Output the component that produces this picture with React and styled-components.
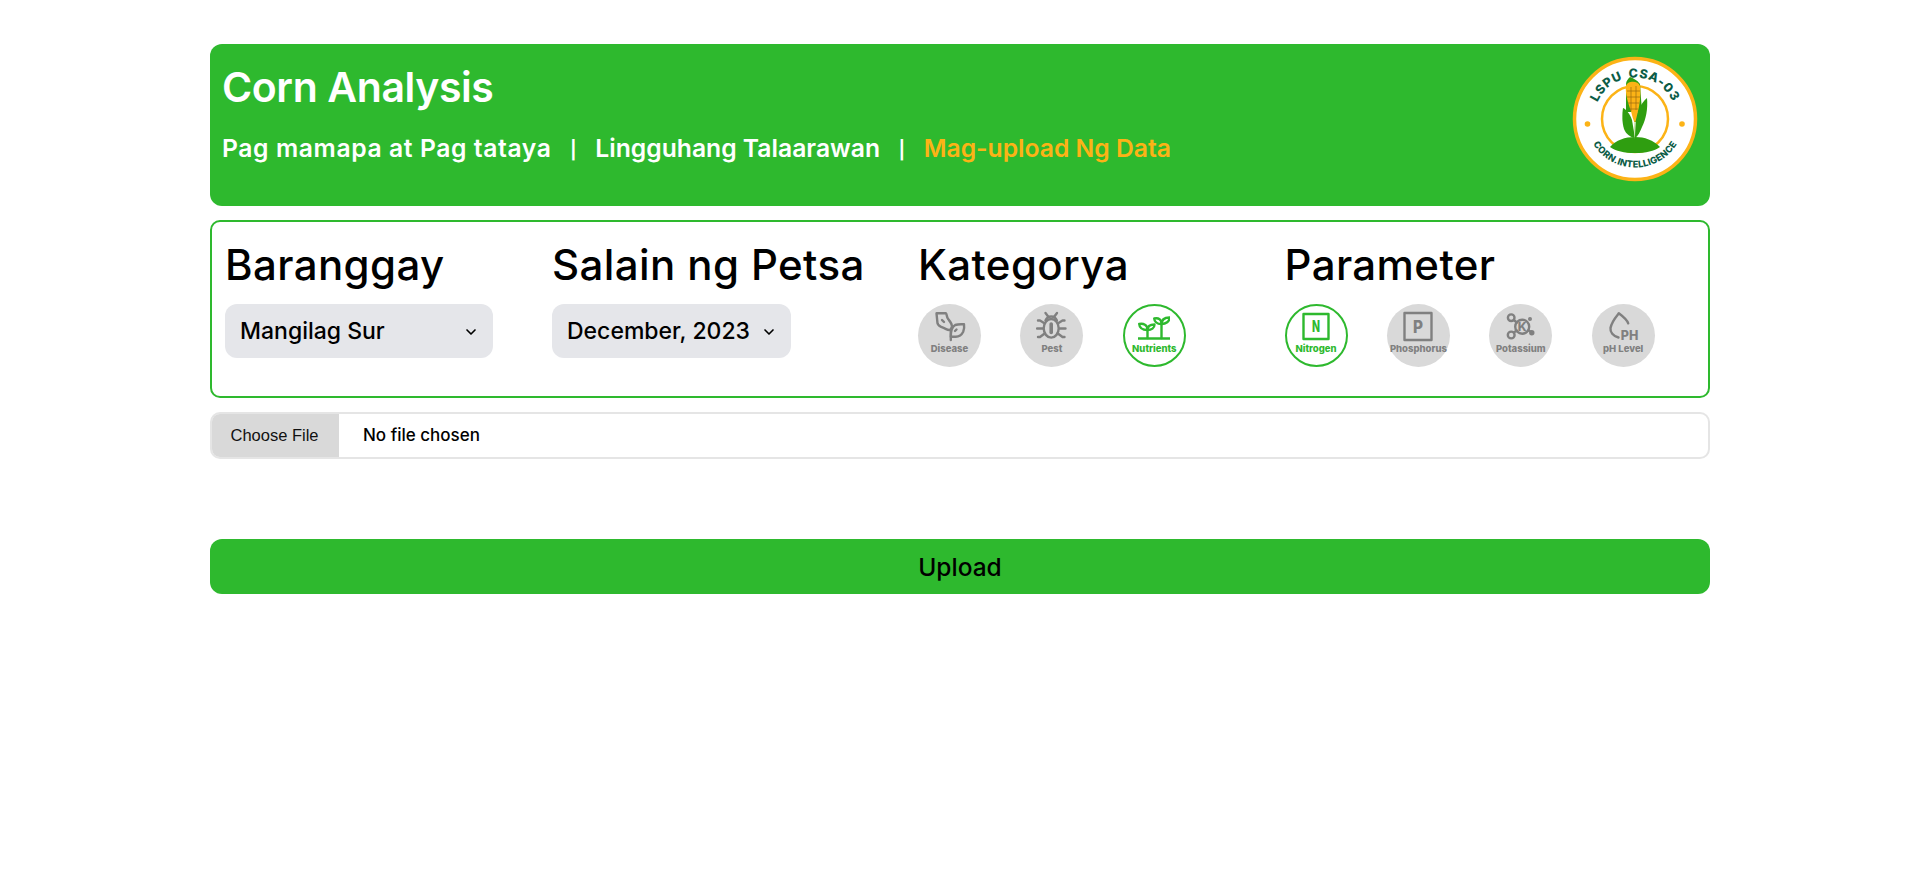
import React from "react";
import styled, { createGlobalStyle } from "styled-components";
import { ChevronDown } from "lucide-react";

const GREEN = "#2eb92e";
const YELLOW = "#fcb316";
const GREY = "#808080";
const FONT = `Inter, "Noto Sans", sans-serif`;

const Global = createGlobalStyle`
  html, body { margin: 0; padding: 0; background: #fff; }
  body { font-family: ${FONT}; color: #000; min-height: 880px; }
  * { box-sizing: border-box; }
`;

const Page = styled.main`
  width: 1500px;
  margin: 0 auto;
  padding-top: 44px;
  display: flex;
  flex-direction: column;
`;

const Header = styled.header`
  height: 162px;
  background: ${GREEN};
  border-radius: 12px;
  padding: 12px 12px 0;
  display: flex;
  justify-content: space-between;
  align-items: flex-start;
  color: #fff;
`;

const Brand = styled.div`
  display: flex;
  flex-direction: column;
  gap: 20px;
`;

const Title = styled.h1`
  margin: 7px 0 0;
  font-size: 41px;
  line-height: 48px;
  font-weight: 600;
  letter-spacing: -0.4px;
`;

const Nav = styled.nav`
  display: flex;
  align-items: center;
  gap: 18px;
  font-size: 24.7px;
  line-height: 34px;
  font-weight: 600;
`;

const NavLink = styled.a`
  color: ${(p) => (p.$active ? YELLOW : "#fff")};
  letter-spacing: ${(p) => p.$track || 0}px;
`;

const NavDivider = styled.span`
  font: 700 21px/34px "DejaVu Sans", sans-serif;
`;

const Panel = styled.section`
  margin-top: 14px;
  height: 178px;
  border: 2px solid ${GREEN};
  border-radius: 10px;
  padding: 14px 13px 0;
  display: grid;
  grid-template-columns: 268px 307px 307.5px 1fr;
  column-gap: 59px;
`;

const Group = styled.div`
  display: flex;
  flex-direction: column;
`;

const Heading = styled.h2`
  margin: 0 0 10px;
  font-size: 42px;
  line-height: 58px;
  font-weight: 500;
  letter-spacing: 0.4px;
  white-space: nowrap;
`;

const SelectWrap = styled.div`
  position: relative;
  width: ${(p) => p.$width}px;
  height: 54px;
`;

const Select = styled.select`
  width: 100%;
  height: 100%;
  appearance: none;
  border: 0;
  border-radius: 12px;
  background: #e5e6ea;
  padding: 0 15px;
  font: 500 23px ${FONT};
  color: #000;
`;

const Chevron = styled(ChevronDown)`
  position: absolute;
  right: 14px;
  top: 20px;
  pointer-events: none;
`;

const Tiles = styled.div`
  display: flex;
  gap: 39.4px;
`;

const Tile = styled.button`
  width: 63px;
  height: 63px;
  flex: none;
  border-radius: 50%;
  border: ${(p) => (p.$active ? `2px solid ${GREEN}` : "0")};
  background: ${(p) => (p.$active ? "#fff" : "#d9d9d9")};
  color: ${(p) => (p.$active ? GREEN : GREY)};
  display: flex;
  flex-direction: column;
  align-items: center;
  justify-content: flex-start;
  padding: ${(p) => (p.$active ? 5 : 7)}px 0 0;
  font: 800 9.5px/12px Inter, sans-serif;
  white-space: nowrap;
`;

const TileIcon = styled.svg`
  width: 32px;
  height: 31px;
  flex: none;
  margin-bottom: 1px;
  fill: none;
  stroke: currentColor;
  stroke-width: 2.4;
  stroke-linecap: round;
  stroke-linejoin: round;
`;

const IconLetter = styled.text`
  font: 800 ${(p) => p.$size}px Inter, sans-serif;
  fill: currentColor;
  stroke: none;
  text-anchor: middle;
`;

const FileInput = styled.input`
  margin-top: 14px;
  height: 47px;
  width: 100%;
  display: block;
  border: 2px solid #e5e5e5;
  border-radius: 10px;
  font: 500 17px ${FONT};
  color: #000;
  background: #fff;
  overflow: hidden;

  &::file-selector-button {
    height: 47px;
    width: 129px;
    margin: -2px 24px -2px -2px;
    border: 0;
    background: #d9d9d9;
    color: #111;
    font: 400 16.5px "Liberation Sans", Arial, sans-serif;
  }
`;

const UploadButton = styled.button`
  margin-top: 80px;
  height: 55px;
  width: 100%;
  border: 0;
  border-radius: 12px;
  background: ${GREEN};
  color: #000;
  font: 500 24.5px ${FONT};
`;

const DiseaseIcon = () => (
  <TileIcon viewBox="0 0 32 31" strokeWidth="2.8">
    <path d="M2.5 2.3h9.3c1.5 1.2.5 3.5 2.5 6 2 2.5 4 4.5 3.5 7.4-.5 2.5-1.5 3.3-2.6 3.3-2 0-3.5-1.3-6.2-2.3-3-1.1-5-2.2-5.5-4.4z" />
    <path d="M8 9l2 2" />
    <path d="M16.8 19v10" />
    <path d="M16.8 25.7c0-6 1.4-10 4.4-11.7 2.8-1 6-.9 8.8-.7.5 3 .2 5-.8 7.4-1.5 3-4.5 5-7.4 5z" />
    <path d="M21 20l1.5-1.5" />
  </TileIcon>
);

const PestIcon = () => (
  <TileIcon viewBox="0 0 32 31" strokeWidth="2.6">
    <path d="M9.5 2l3 4M21 2l-3 4" />
    <path d="M9.5 9.5c1-2.5 3-4 5.7-4s4.7 1.5 5.7 4" />
    <ellipse cx="15.2" cy="17.3" rx="7.5" ry="9.3" />
    <path d="M15.2 13v8.5" strokeWidth="3.6" />
    <path d="M8 12L4 9.5H2M22.5 12l4-2.5h2M7 17.5H1M23.5 17.5h6M8 23l-4 3H2M22.5 23l4 3h2" />
  </TileIcon>
);

const NutrientsIcon = () => (
  <TileIcon viewBox="0 0 32 31" strokeWidth="3" strokeLinecap="butt">
    <path d="M.5 27.5h31" />
    <path d="M9.5 27V19M23.5 27V12" />
    <path d="M9.5 19c-4.500 0-8-1.800-8.300-6 4-1 8.500.8 8.300 6zM9.500 19c0-3.500 2.500-5.500 7-5.500 0 3.500-3 5.500-7 5.500z" />
    <path d="M23.5 13c-4 0-7-2-7.300-5.500 4.500-1 7.500 1 7.300 5.500zM23.500 13c0-4 3-6.500 8-6.500 0 4-3.500 6.500-8 6.500z" />
  </TileIcon>
);

const BoxLetterIcon = ({ letter, size, width, box }) => (
  <TileIcon viewBox="0 0 32 31" strokeWidth="3" strokeLinecap="butt" strokeLinejoin="miter">
    <rect x={16 - box / 2} y={15.5 - box / 2} width={box} height={box} />
    <IconLetter
      x="16"
      y={15.5 + size * 0.36}
      $size={size}
      textLength={width}
      lengthAdjust="spacingAndGlyphs"
    >
      {letter}
    </IconLetter>
  </TileIcon>
);

const PotassiumIcon = () => (
  <TileIcon viewBox="0 0 32 31" strokeWidth="1.8">
    <circle cx="17.2" cy="15.7" r="7" />
    <IconLetter x="17.2" y="20" $size={12}>K</IconLetter>
    <circle cx="6.2" cy="6.7" r="3.3" />
    <circle cx="6.2" cy="24" r="3.4" />
    <circle cx="26.8" cy="21.7" r="1.5" fill="currentColor" />
    <circle cx="25" cy="8" r="0.8" fill="currentColor" />
    <path d="M8.8 9l3 2.5M8.8 21.5l3-2M23.5 19.5l2 1" />
  </TileIcon>
);

const PhIcon = () => (
  <TileIcon viewBox="0 0 32 31" strokeWidth="2.4">
    <path d="M11.5 26.5C6 25 3 21 3.5 17 4.500 11 8 7 11.800 2.300c4 3 8 6 9.400 10" />
    <IconLetter x="22.5" y="28.5" $size={12.5}>PH</IconLetter>
  </TileIcon>
);

const Logo = () => (
  <svg width="126" height="126" viewBox="0 0 126 126" style={{ flex: "none" }}>
    <defs>
      <path id="arcTop" d="M22 62.5a41 41 0 0 1 82 0" />
      <path id="arcBottom" d="M14 62.5a49 49 0 0 0 98 0" />
    </defs>
    <circle cx="63" cy="63" r="60.5" fill="#fff" stroke={YELLOW} strokeWidth="3.5" />
    <circle cx="63" cy="63" r="33" fill="#fff" stroke={YELLOW} strokeWidth="2.5" />
    <circle cx="15.5" cy="68" r="2.8" fill={YELLOW} />
    <circle cx="110" cy="68" r="2.8" fill={YELLOW} />
    <path d="M38 91c6-7 15-10 25-10s18 3 25 10c-6 4-14 6-25 6s-19-2-25-6z" fill="#2f9e10" />
    <path d="M58 21c3 1 7 3 10 7l2 28H54V28c0-3 2-5 4-7z" fill="#2f9e10" />
    <path d="M51 52c3 1 7 6 9 12l3 18c-5-1-9-4-11-9-2-6-2-15-1-21z" fill="#2f9e10" />
    <path d="M75 42c1 11-1 21-5 29-2 5-4 9-7 11l-1-17c3-9 7-18 13-23z" fill="#2f9e10" />
    <path d="M54 30c1-5 12-6 14 0 1 6 0 18-2 25-1 4-2 9-3 12-2-3-3-8-4-12-3-8-6-18-5-25z" fill={YELLOW} />
    <path d="M55 35h13M55 41h13M56 47h11M58 53h8M59 31v24M64 30v24" stroke="#9a6a10" strokeWidth="0.7" fill="none" />
    <path d="M62 66l.8 17 1-17z" fill="#dff0c8" />
    <text fontFamily="Inter, sans-serif" fontWeight="800" fontSize="12.5" fill="#0b5c46" letterSpacing="0.8" wordSpacing="2">
      <textPath href="#arcTop" startOffset="50%" textAnchor="middle">LSPU CSA-03</textPath>
    </text>
    <text fontFamily="Inter, sans-serif" fontWeight="800" fontSize="9.2" fill="#0b5c46" letterSpacing="0.2">
      <textPath href="#arcBottom" startOffset="50%" textAnchor="middle">CORN.INTELLIGENCE</textPath>
    </text>
  </svg>
);

const categories = [
  { label: "Disease", Icon: DiseaseIcon },
  { label: "Pest", Icon: PestIcon },
  { label: "Nutrients", Icon: NutrientsIcon, active: true },
];

const parameters = [
  { label: "Nitrogen", Icon: () => <BoxLetterIcon letter="N" size={16} width={8} box={25} />, active: true },
  { label: "Phosphorus", Icon: () => <BoxLetterIcon letter="P" size={17} width={10} box={27} /> },
  { label: "Potassium", Icon: PotassiumIcon },
  { label: "pH Level", Icon: PhIcon },
];

const TileRow = ({ items }) => (
  <Tiles>
    {items.map(({ label, Icon, active }) => (
      <Tile key={label} $active={active}>
        <Icon />
        {label}
      </Tile>
    ))}
  </Tiles>
);

export default function App() {
  return (
    <>
      <Global />
      <Page>
        <Header>
          <Brand>
            <Title>Corn Analysis</Title>
            <Nav>
              <NavLink $track={0.6}>Pag mamapa at Pag tataya</NavLink>
              <NavDivider>|</NavDivider>
              <NavLink>Lingguhang Talaarawan</NavLink>
              <NavDivider>|</NavDivider>
              <NavLink $active>Mag-upload Ng Data</NavLink>
            </Nav>
          </Brand>
          <Logo />
        </Header>
        <Panel>
          <Group>
            <Heading>Baranggay</Heading>
            <SelectWrap $width={268}>
              <Select defaultValue="Mangilag Sur">
                <option>Mangilag Sur</option>
              </Select>
              <Chevron size={16} strokeWidth={2.5} />
            </SelectWrap>
          </Group>
          <Group>
            <Heading>Salain ng Petsa</Heading>
            <SelectWrap $width={239}>
              <Select defaultValue="December, 2023">
                <option>December, 2023</option>
              </Select>
              <Chevron size={16} strokeWidth={2.5} />
            </SelectWrap>
          </Group>
          <Group>
            <Heading>Kategorya</Heading>
            <TileRow items={categories} />
          </Group>
          <Group>
            <Heading>Parameter</Heading>
            <TileRow items={parameters} />
          </Group>
        </Panel>
        <FileInput type="file" />
        <UploadButton>Upload</UploadButton>
      </Page>
    </>
  );
}
